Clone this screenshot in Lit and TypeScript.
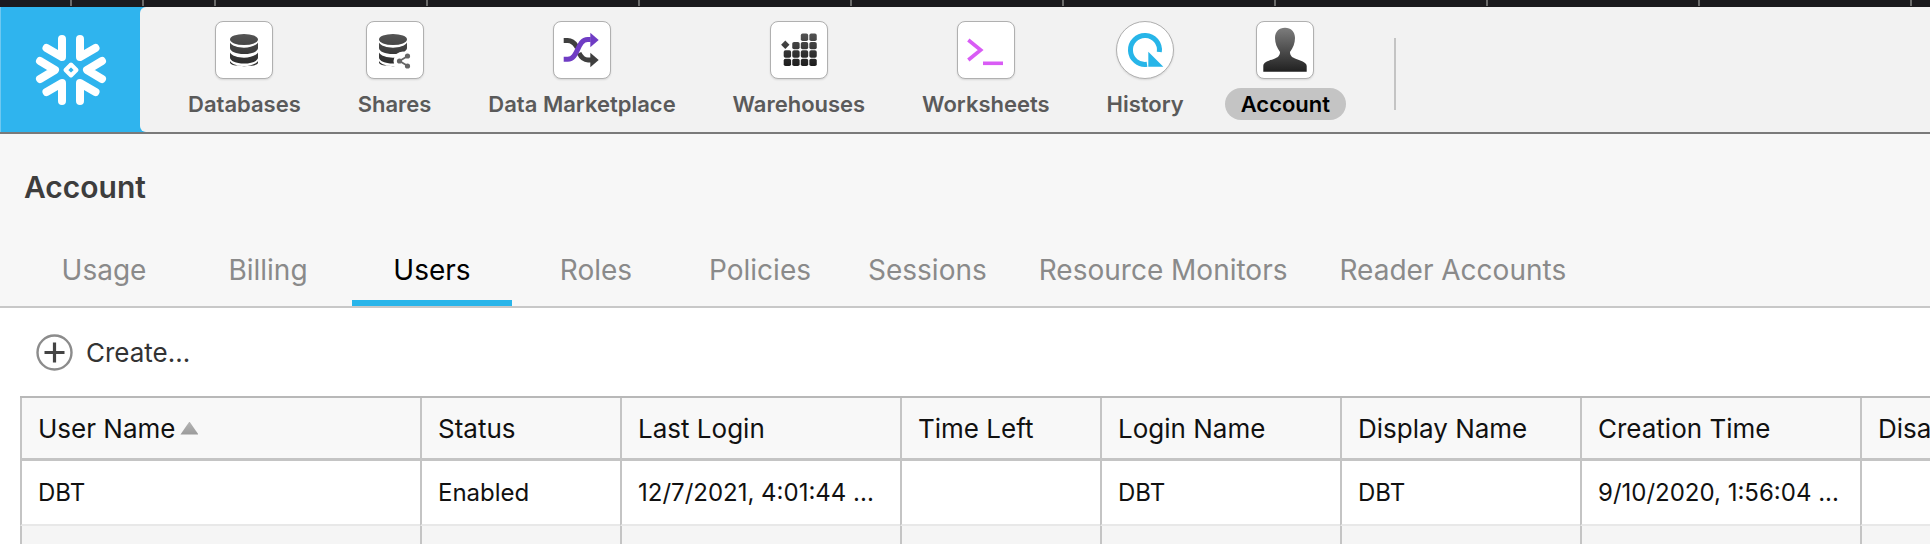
import { LitElement, html, css, svg } from 'lit';
import { customElement } from 'lit/decorators.js';

const COLS = [400, 200, 280, 200, 240, 240, 280, 200];
const HEADERS = ['User Name', 'Status', 'Last Login', 'Time Left', 'Login Name', 'Display Name', 'Creation Time', 'Disabled'];
const ROW = ['DBT', 'Enabled', '12/7/2021, 4:01:44 ...', '', 'DBT', 'DBT', '9/10/2020, 1:56:04 ...', ''];
const TABS = ['Usage', 'Billing', 'Users', 'Roles', 'Policies', 'Sessions', 'Resource Monitors', 'Reader Accounts'];
const TICKS = [71, 143, 215, 427, 639, 851, 1063, 1275, 1487, 1699, 1911];

const grad = (id: string, top: string, bottom: string) => svg`
  <linearGradient id=${id} gradientUnits="userSpaceOnUse" x1="0" y1="8" x2="0" y2="50">
    <stop offset="0" stop-color=${top}></stop>
    <stop offset="1" stop-color=${bottom}></stop>
  </linearGradient>`;

const dbStack = (id: string, cx: number, w: number) => {
  const l = cx - w / 2;
  const h = w / 2;
  return svg`
    <defs>${grad(id, '#5c5c5c', '#222')}</defs>
    <g fill="url(#${id})">
      <ellipse cx=${cx} cy="18.5" rx=${h} ry="5.5"></ellipse>
      <path d="M${l} 21.5c2 3.4 8 5.2 ${h} 5.2s${h - 2}-1.8 ${h}-5.2v5.5c0 3.4-6 6-${h} 6s-${h}-2.6-${h}-6z"></path>
      <path d="M${l} 31.5c2 3.4 8 5.2 ${h} 5.2s${h - 2}-1.8 ${h}-5.2v5c0 3.4-6 6-${h} 6s-${h}-2.6-${h}-6z"></path>
      <path d="M${l} 40c2 3.4 8 5.2 ${h} 5.2s${h - 2}-1.8 ${h}-5.2v1.5c0 2.6-6 3.5-${h} 3.5s-${h}-1-${h}-3.5z"></path>
    </g>`;
};

const warehouseCells = [
  [2, 0], [3, 0],
  [1, 1], [2, 1], [3, 1],
  [0, 2], [1, 2], [2, 2], [3, 2],
  [0, 3], [1, 3], [2, 3], [3, 3],
];

const ICONS: Record<string, unknown> = {
  databases: svg`${dbStack('db', 29, 28)}`,
  shares: svg`
    ${dbStack('sh', 27, 28)}
    <circle cx="37" cy="40" r="9.5" fill="#fff"></circle>
    <g stroke="#666" stroke-width="1.8" fill="none">
      <path d="M41 35.5 33.5 40 41 44.5"></path>
    </g>
    <g fill="#666">
      <circle cx="41.5" cy="35" r="2.6"></circle>
      <circle cx="33.5" cy="40" r="2.6"></circle>
      <circle cx="41.5" cy="45" r="2.6"></circle>
    </g>`,
  market: svg`
    <g fill="none" stroke-width="5">
      <path d="M10.7 19.5h4c6 0 7.500 4 9.500 7" stroke="#3f3f3f"></path>
      <path d="M26 32c2 4 4.500 7 9 7h3" stroke="#3f3f3f"></path>
      <path d="M10.700 38.300h4c11 0 9-19.800 20-19.800h3" stroke="#6f3cc4"></path>
    </g>
    <path d="M37.300 11.700 45.700 19l-8.400 7.300z" fill="#6f3cc4"></path>
    <path d="M37.300 31.700 45.700 39l-8.400 7.300z" fill="#3f3f3f"></path>`,
  warehouses: svg`
    <defs>${grad('wh', '#5a5a5a', '#141414')}</defs>
    <g fill="url(#wh)">
      ${warehouseCells.map(
        ([c, r]) => svg`<rect x=${13.7 + c * 8.55} y=${12.6 + r * 8.35} width="7.400" height="7.400" rx="1.800"></rect>`
      )}
      <path d="M15.300 19.600l4.200 4.200-4.200 4.200-4.200-4.200z"></path>
    </g>`,
  worksheets: svg`
    <path d="M11.300 19 23.700 29 11.300 39" fill="none" stroke="#d95cf5" stroke-width="3.600"></path>
    <path d="M26 42.300h20" fill="none" stroke="#d95cf5" stroke-width="3.600"></path>`,
  history: svg`
    <path d="M31 43.300A14.500 14.500 0 1 1 43.300 31" fill="none" stroke="#27b5e8" stroke-width="5"></path>
    <path d="M32.300 30.700v15h15z" fill="#27b5e8"></path>`,
  account: svg`
    <defs>${grad('ac', '#7a7a7a', '#222')}</defs>
    <path fill="url(#ac)" d="M7.300 50.700V45C7.300 41 14 39.500 19 37.500c4-1.600 5-4 5-6.500-3-4-5-9-5-14C19 10.500 23 6.700 29 6.700S39 10.500 39 17c0 5-2 10-5 14 0 2.500 1 4.900 5 6.500 5 2 11.700 3.500 11.700 7.500v5.700z"></path>`,
};

const NAV = [
  { label: 'Databases', icon: 'databases' },
  { label: 'Shares', icon: 'shares' },
  { label: 'Data Marketplace', icon: 'market' },
  { label: 'Warehouses', icon: 'warehouses' },
  { label: 'Worksheets', icon: 'worksheets' },
  { label: 'History', icon: 'history', round: true },
  { label: 'Account', icon: 'account', active: true },
];

@customElement('app-root')
export class AppRoot extends LitElement {
  static styles = css`
    :host {
      display: block;
      width: 100%;
      height: 544px;
      overflow: hidden;
      background: #fff;
      font-family: Inter, 'Liberation Sans', sans-serif;
    }
    .ruler {
      display: block;
      height: 7px;
      background: #1b1a1e;
    }
    .topbar {
      display: flex;
      height: 125px;
      background: #2fb4ee;
      border-bottom: 2px solid #7a7a7a;
    }
    .logo {
      width: 140px;
      flex: none;
      box-sizing: border-box;
      border-left: 1px solid #6fc8f0;
      display: flex;
      align-items: center;
      justify-content: center;
    }
    .nav {
      flex: 1;
      display: flex;
      gap: 24.900px;
      padding: 14px 0 0 32px;
      background: #f2f2f2;
      border-radius: 6px 0 0 6px;
    }
    .item {
      display: flex;
      flex-direction: column;
      align-items: center;
      gap: 9px;
    }
    .tile {
      width: 58px;
      height: 58px;
      box-sizing: border-box;
      border: 1px solid #b0b0b0;
      border-radius: 8px;
      background: #fff;
      box-shadow: 0 1px 2px rgba(0, 0, 0, 0.12);
    }
    .tile.round {
      border-radius: 50%;
    }
    .tile svg {
      display: block;
      margin: -1px;
    }
    .label {
      height: 32px;
      line-height: 32px;
      padding: 0 16px;
      border-radius: 16px;
      font-size: 22px;
      font-weight: 600;
      color: #5a5a5a;
      white-space: nowrap;
    }
    .item.active .label {
      background: #c4c4c4;
      color: #000;
    }
    .divider {
      width: 2px;
      height: 72px;
      margin: 17px 0 0 23px;
      background: #c4c4c4;
    }
    .head {
      height: 174px;
      box-sizing: border-box;
      background: #f7f7f7;
      border-bottom: 2px solid #c8c8c8;
      display: flex;
      flex-direction: column;
      justify-content: space-between;
    }
    h1 {
      margin: 0;
      padding: 36px 0 0 24px;
      font-size: 30px;
      line-height: 34px;
      font-weight: 600;
      color: #3d3d3d;
    }
    .tabs {
      display: flex;
      gap: 4px;
      padding-left: 24px;
    }
    .tab {
      min-width: 160px;
      height: 66px;
      box-sizing: border-box;
      padding: 0 24px;
      line-height: 60px;
      text-align: center;
      font-size: 28px;
      color: #8a8a8a;
      white-space: nowrap;
    }
    .tab.active {
      color: #000;
      border-bottom: 6px solid #29b5ea;
    }
    .toolbar {
      display: flex;
      align-items: center;
      gap: 13px;
      height: 88px;
      box-sizing: border-box;
      padding-left: 36px;
      font-size: 26px;
      color: #333;
    }
    .toolbar svg {
      display: block;
    }
    .grid {
      display: grid;
      width: max-content;
      margin-left: 20px;
      border-top: 2px solid #b8b8b8;
    }
    .cell {
      box-sizing: border-box;
      border-left: 2px solid #c4c4c4;
      padding-left: 16px;
      display: flex;
      align-items: center;
      gap: 5px;
      color: #111;
      white-space: nowrap;
      overflow: hidden;
    }
    .cell.th {
      height: 63px;
      font-size: 26px;
      background: #f8f8f8;
      border-bottom: 3px solid #c4c4c4;
    }
    .cell.td {
      height: 65px;
      font-size: 24px;
      background: #fff;
      border-bottom: 2px solid #e8e8e8;
    }
    .cell.alt {
      height: 60px;
      background: #f5f5f5;
    }
    .sort {
      width: 18px;
      height: 13px;
      background: linear-gradient(#b4b4b4, #9a9a9a);
      clip-path: polygon(50% 0, 100% 100%, 0 100%);
    }
  `;

  render() {
    const columns = COLS.map((w) => `${w}px`).join(' ');
    return html`
      <svg class="ruler" width="1930" height="7">
        ${TICKS.map((x) => svg`<rect x=${x - 1} y="0" width="2" height="6" fill="#6a6a6a"></rect>`)}
      </svg>
      <div class="topbar">
        <div class="logo">
          <svg width="80" height="80" viewBox="-40 -40 80 80" fill="none" stroke="#fff" stroke-width="8" stroke-linecap="round" stroke-linejoin="round">
            <path d="M-9-31v18L-24.500-22"></path>
            <path d="M9-31v18L24.500-22"></path>
            <path d="M-31-9-16 0-31 9"></path>
            <path d="M31-9 16 0 31 9"></path>
            <path d="M-9 31V13L-24.500 22"></path>
            <path d="M9 31V13L24.500 22"></path>
            <path d="M0-5.500 5.500 0 0 5.500-5.500 0z" stroke-width="4"></path>
          </svg>
        </div>
        <nav class="nav">
          ${NAV.map(
            (n) => html`
              <div class="item ${n.active ? 'active' : ''}">
                <div class="tile ${n.round ? 'round' : ''}">
                  <svg width="58" height="58" viewBox="0 0 58 58">${ICONS[n.icon]}</svg>
                </div>
                <div class="label">${n.label}</div>
              </div>
            `
          )}
          <div class="divider"></div>
        </nav>
      </div>
      <div class="head">
        <h1>Account</h1>
        <div class="tabs">
          ${TABS.map((t) => html`<div class="tab ${t === 'Users' ? 'active' : ''}">${t}</div>`)}
        </div>
      </div>
      <div class="toolbar">
        <svg width="37" height="37" viewBox="0 0 37 37">
          <circle cx="18.500" cy="18.500" r="17" fill="#fff" stroke="#8c8c8c" stroke-width="2.400"></circle>
          <path d="M18.500 8.500v20M8.500 18.500h20" stroke="#444" stroke-width="3.200" fill="none"></path>
        </svg>
        <span>Create...</span>
      </div>
      <div class="grid" style="grid-template-columns:${columns}">
        ${HEADERS.map(
          (h, i) => html`<div class="cell th">${h}${i === 0 ? html`<span class="sort"></span>` : ''}</div>`
        )}
        ${ROW.map((v) => html`<div class="cell td">${v}</div>`)}
        ${ROW.map(() => html`<div class="cell alt"></div>`)}
      </div>
    `;
  }
}
